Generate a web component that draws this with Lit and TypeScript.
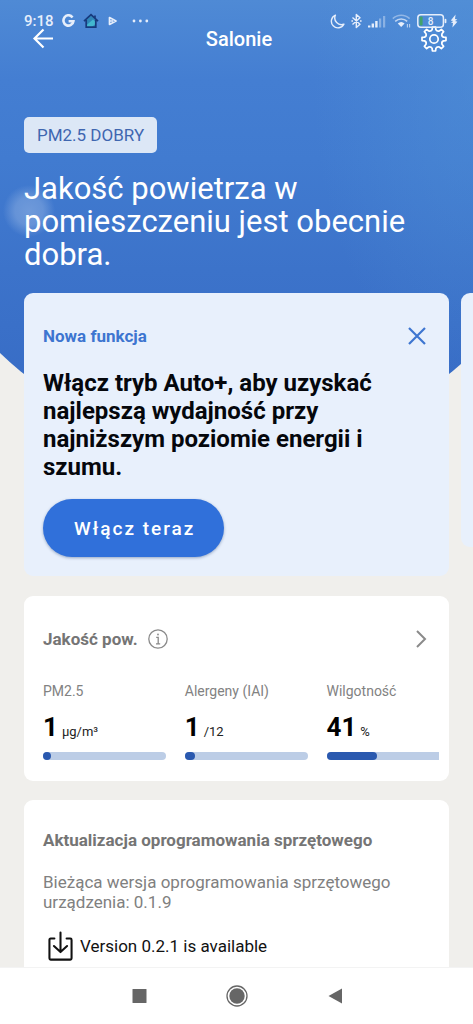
import { LitElement, html, svg, css } from "lit";
import { customElement, property } from "lit/decorators.js";

interface Metric {
  label: string;
  value: string;
  unit: string;
  percent: number;
}

const METRICS: Metric[] = [
  { label: "PM2.5", value: "1", unit: "μg/m³", percent: 2 },
  { label: "Alergeny (IAI)", value: "1", unit: "/12", percent: 8 },
  { label: "Wilgotność", value: "41", unit: "%", percent: 41 },
];

/** Outline of a cog wheel with rounded teeth, centred on 14,14. */
function cogPath(teeth: number, outer: number, inner: number): string {
  const step = (Math.PI * 2) / teeth;
  const at = (angle: number, radius: number) =>
    `${(14 + Math.sin(angle) * radius).toFixed(2)} ${(14 - Math.cos(angle) * radius).toFixed(2)}`;
  let d = "";
  for (let i = 0; i < teeth; i++) {
    const a = i * step;
    d += `${i ? "L" : "M"}${at(a - step * 0.17, outer)}L${at(a + step * 0.17, outer)}`;
    d += `L${at(a + step * 0.25, inner + 0.6)}Q${at(a + step * 0.5, inner - 1.2)} ${at(a + step * 0.75, inner + 0.6)}`;
  }
  return d + "Z";
}

@customElement("status-bar")
export class StatusBar extends LitElement {
  static styles = css`
    :host {
      display: flex;
      align-items: center;
      justify-content: space-between;
      height: 42px;
      padding: 0 15px 0 24px;
      color: #e6eefb;
      font-size: 15px;
      font-weight: 500;
    }
    .group {
      display: flex;
      align-items: center;
    }
    .left {
      gap: 8px;
    }
    .right {
      gap: 6px;
    }
    svg {
      display: block;
      flex: none;
    }
    .digit {
      font: 500 10px Roboto, sans-serif;
    }
  `;

  render() {
    return html`
      <div class="group left">
        <time>9:18</time>
        <svg width="13" height="14" viewBox="0 0 13 14" fill="none" stroke="currentColor" stroke-width="2.6" aria-hidden="true">
          <path d="M10.500 3.400A5 5.200 0 1 0 11.400 7.200H6.600" />
        </svg>
        <svg width="16" height="16" viewBox="0 0 16 16" aria-hidden="true">
          <path d="M3.4 7V14.2H12.6V7L8 2.8Z" fill="#2f86b8" />
          <path d="M3 12.5L10 6.5L12.6 9V11L8 14.4H3.4Z" fill="#43b7cf" />
          <path d="M1 8.2L8 1.6L15 8.2M3.2 7V14.2H12.8V7M12 2.5V5" fill="none" stroke="#173a7c" stroke-width="1.7" />
        </svg>
        <svg width="12" height="12" viewBox="0 0 12 12" fill="none" stroke="currentColor" stroke-width="1.7" stroke-linejoin="round" aria-hidden="true">
          <path d="M2.500 2.600L9 6L2.500 9.400ZM3 6H6" />
        </svg>
        <svg width="24" height="6" viewBox="0 0 24 6" fill="currentColor" aria-hidden="true">
          <circle cx="7" cy="3" r="1.4" /><circle cx="13.400" cy="3" r="1.4" /><circle cx="19.800" cy="3" r="1.4" />
        </svg>
      </div>
      <div class="group right">
        <svg width="15" height="15" viewBox="0 0 15 15" fill="none" stroke="currentColor" stroke-width="1.4" stroke-linejoin="round" aria-hidden="true">
          <path d="M5.4 1.2A6.6 6.6 0 1 0 13.9 10.2A6.7 6.7 0 0 1 5.4 1.2Z" />
        </svg>
        <svg width="11" height="16" viewBox="0 0 11 16" fill="none" stroke="currentColor" stroke-width="1.4" stroke-linejoin="round" aria-hidden="true">
          <path d="M1.5 4.5L9 11.2L5.3 14.6V1.4L9 4.8L1.5 11.5" />
          <path d="M0.4 8H2M9 8H10.6" />
        </svg>
        <svg width="18" height="13" viewBox="0 0 18 13" fill="currentColor" aria-hidden="true">
          <rect x="0" y="10.5" width="2.4" height="2" />
          <rect x="3.6" y="8.5" width="2.4" height="4" />
          <rect x="7.2" y="6" width="2.4" height="6.5" />
          <g opacity="0.4">
            <rect x="11" y="3.5" width="2.2" height="9" />
            <rect x="15" y="1" width="2.2" height="11.5" />
          </g>
        </svg>
        <svg width="19" height="14" viewBox="0 0 19 14" fill="none" stroke="currentColor" stroke-width="1.5" aria-hidden="true">
          <path d="M0.8 4.6A12 12 0 0 1 17.6 4.6" opacity="0.45" />
          <path d="M3.2 7.4A8.6 8.6 0 0 1 15.2 7.4" opacity="0.75" />
          <path d="M5.8 9.6A5 5 0 0 1 12.6 9.6L9.2 13Z" fill="currentColor" stroke="none" />
          <path d="M15.4 10V13.6M17.6 10V13.6" stroke-width="1.1" opacity="0.7" />
        </svg>
        <svg width="41" height="14" viewBox="0 0 41 14" aria-label="8%" role="img">
          <rect x="0.8" y="0.8" width="25.6" height="12.4" rx="3" fill="none" stroke="currentColor" stroke-width="1.5" />
          <rect x="2.6" y="2.6" width="3" height="8.8" rx="1" fill="#41a36b" />
          <rect x="27.6" y="4.8" width="1.8" height="4.4" rx="0.9" fill="currentColor" />
          <text class="digit" x="13.6" y="10.6" text-anchor="middle" fill="currentColor">8</text>
          <path d="M38.6 0.5L33.8 6.4L36.2 6.9L34 8.4L36 9L35.4 13.5L40.4 7.8L38 7L40.4 5.6L38 5Z" fill="currentColor" />
        </svg>
      </div>
    `;
  }
}

@customElement("metric-item")
export class MetricItem extends LitElement {
  @property({ attribute: false }) metric!: Metric;

  static styles = css`
    :host {
      display: block;
    }
    .label {
      color: #828282;
      font-size: 14px;
      line-height: 20px;
    }
    .reading {
      display: flex;
      align-items: baseline;
      gap: 4px;
      margin: 9px 0 3px;
      color: #000;
      line-height: 34px;
    }
    .value {
      font-size: 26px;
      font-weight: 700;
    }
    .unit {
      color: #222;
      font-size: 13px;
    }
    .track {
      height: 8px;
      border-radius: 4px;
      background: #bccde6;
    }
    .fill {
      min-width: 8px;
      height: 8px;
      border-radius: 4px;
      background: #2a59af;
    }
  `;

  render() {
    const { label, value, unit, percent } = this.metric;
    return html`
      <div class="label">${label}</div>
      <div class="reading"><span class="value">${value}</span><span class="unit">${unit}</span></div>
      <div class="track"><div class="fill" style="width:${percent}%"></div></div>
    `;
  }
}

@customElement("app-root")
export class AppRoot extends LitElement {
  static styles = css`
    :host {
      display: flex;
      flex-direction: column;
      height: 100vh;
      background: #f0efec;
      font-family: Roboto, "Noto Sans", sans-serif;
    }
    * {
      box-sizing: border-box;
    }
    h1,
    h2,
    p {
      margin: 0;
      font-weight: 400;
    }
    button {
      display: grid;
      place-items: center;
      margin: 0;
      padding: 0;
      border: 0;
      background: none;
      color: inherit;
      font: inherit;
      cursor: pointer;
    }
    svg {
      display: block;
    }
    .screen {
      position: relative;
      flex: 1;
      min-height: 0;
      overflow: hidden;
      isolation: isolate;
    }
    .sky {
      position: absolute;
      inset: 0 0 auto;
      z-index: -1;
      height: 480px;
      clip-path: circle(72vw at 50% calc(354px - 52vw));
      background:
        radial-gradient(circle at 29px 211px, #6f9ada 0, #6f9adacc 14px, #6f9ada00 26px),
        radial-gradient(ellipse 160px 300px at 100% 80px, #5597d866, #5597d800),
        linear-gradient(#4f8ad5, #447ed2 80px, #417bd0 160px, #3c73ca 270px, #386dc6 380px);
    }
    .status {
      position: absolute;
      inset: 0 0 auto;
    }
    .appbar {
      display: grid;
      grid-template-columns: 40px 1fr 40px;
      align-items: center;
      height: 78px;
      padding: 0 19px 0 24px;
      color: #fff;
    }
    .appbar h1 {
      font-size: 20px;
      font-weight: 500;
      text-align: center;
    }
    .intro {
      padding: 39px 24px 22px;
      color: #fff;
    }
    .chip {
      display: inline-block;
      padding: 0 13px;
      border-radius: 5px;
      background: #dce7f6;
      color: #3f66b0;
      font-size: 17px;
      line-height: 36px;
    }
    .headline {
      margin-top: 19px;
      font-size: 31px;
      line-height: 33px;
    }
    .carousel {
      display: flex;
      align-items: flex-start;
      gap: 12px;
      padding-left: 24px;
      overflow: hidden;
    }
    .promo {
      flex: none;
      width: calc(100% - 24px);
      min-height: 254px;
      padding: 19px;
      border-radius: 9px;
      background: #e8f0fc;
    }
    .promo-head {
      display: flex;
      align-items: center;
      justify-content: space-between;
      height: 48px;
      color: #3d75d0;
    }
    .promo-tag {
      font-size: 17px;
      font-weight: 700;
    }
    .promo-title {
      margin-top: 9px;
      color: #05070c;
      font-size: 24px;
      font-weight: 700;
      line-height: 28px;
    }
    .cta {
      height: 58px;
      margin-top: 18px;
      padding: 0 29px 0 31px;
      border-radius: 29px;
      background: #3070da;
      box-shadow: 0 1px 3px #1c3c7466;
      color: #fff;
      font-size: 19px;
      font-weight: 500;
      letter-spacing: 2px;
    }
    .card {
      margin: 20px 24px 0;
      padding: 19px;
      border-radius: 9px;
      background: #fff;
    }
    .air {
      padding-right: 10px;
      padding-bottom: 21px;
    }
    .card-title {
      color: #757575;
      font-size: 17px;
      font-weight: 700;
    }
    .air-head {
      display: flex;
      align-items: center;
      gap: 10px;
      height: 48px;
      padding-right: 10px;
      color: #8a8a8a;
    }
    .more {
      margin-left: auto;
    }
    .metrics {
      display: flex;
      gap: 19px;
      margin-top: 18px;
      overflow: hidden;
    }
    .metric {
      flex: 0 0 31%;
    }
    .firmware {
      margin-top: 19px;
      font-size: 17px;
    }
    .firmware .card-title {
      line-height: 42px;
    }
    .current {
      margin-top: 11px;
      color: #808080;
      line-height: 20px;
    }
    .update {
      display: flex;
      align-items: center;
      gap: 7px;
      margin-top: 19px;
      padding-left: 5px;
      color: #111;
    }
    .navbar {
      display: flex;
      flex: none;
      justify-content: center;
      height: 57px;
      border-top: 1px solid #f3f3f3;
      background: #fff;
      color: #666;
    }
    .navbar button {
      width: 98px;
    }
  `;

  render() {
    return html`
      <main class="screen">
        <div class="sky"></div>
        <header class="appbar">
          <button aria-label="Wstecz">
            <svg width="40" height="28" viewBox="0 0 40 28" fill="none" stroke="currentColor" stroke-width="2.2">
              <path d="M29 13.500H11M19.500 4.500L10.500 13.500L19.500 22.500" />
            </svg>
          </button>
          <h1>Salonie</h1>
          <button aria-label="Ustawienia">
            <svg width="28" height="28" viewBox="0 0 28 28" fill="none" stroke="currentColor" stroke-width="1.7" stroke-linejoin="round">
              ${svg`<path d=${cogPath(8, 12.1, 9)} />`}
              <circle cx="14" cy="14" r="4.200" />
            </svg>
          </button>
        </header>
        <status-bar class="status"></status-bar>

        <section class="intro">
          <span class="chip">PM2.5 DOBRY</span>
          <p class="headline">Jakość powietrza w pomieszczeniu jest obecnie dobra.</p>
        </section>

        <section class="carousel">
          <article class="promo">
            <div class="promo-head">
              <span class="promo-tag">Nowa funkcja</span>
              <button aria-label="Zamknij">
                <svg width="26" height="26" viewBox="0 0 26 26" fill="none" stroke="currentColor" stroke-width="2.2">
                  <path d="M5 5L21 21M21 5L5 21" />
                </svg>
              </button>
            </div>
            <h2 class="promo-title">Włącz tryb Auto+, aby uzyskać najlepszą wydajność przy najniższym poziomie energii i szumu.</h2>
            <button class="cta">Włącz teraz</button>
          </article>
          <article class="promo"></article>
        </section>

        <section class="card air">
          <div class="air-head">
            <h2 class="card-title">Jakość pow.</h2>
            <button aria-label="Informacje">
              <svg width="20" height="20" viewBox="0 0 20 20" fill="none" stroke="currentColor" stroke-width="1.300">
                <circle cx="10" cy="10" r="9.200" />
                <path d="M8.200 8.300H10.200V14.800M8 14.800H12.200" />
                <circle cx="10" cy="5.500" r="0.900" fill="currentColor" stroke="none" />
              </svg>
            </button>
            <button class="more" aria-label="Szczegóły">
              <svg width="16" height="22" viewBox="0 0 16 22" fill="none" stroke="currentColor" stroke-width="2">
                <path d="M4 3L12 11L4 19" />
              </svg>
            </button>
          </div>
          <div class="metrics">
            ${METRICS.map((m) => html`<metric-item class="metric" .metric=${m}></metric-item>`)}
          </div>
        </section>

        <section class="card firmware">
          <h2 class="card-title">Aktualizacja oprogramowania sprzętowego</h2>
          <p class="current">Bieżąca wersja oprogramowania sprzętowego urządzenia: 0.1.9</p>
          <div class="update">
            <svg width="25" height="30" viewBox="0 0 26 32" fill="none" stroke="currentColor" stroke-width="2.2" stroke-linejoin="round" stroke-linecap="round" aria-hidden="true">
              <path d="M6.500 8H2.500Q1.200 8 1.200 9.500V29Q1.200 30.500 2.500 30.500H23.500Q24.800 30.500 24.800 29V9.500Q24.800 8 23.500 8H19.500" />
              <path d="M13 1.500V22M6 16L13 22.500L20 16" />
            </svg>
            <span>Version 0.2.1 is available</span>
          </div>
        </section>
      </main>

      <nav class="navbar">
        <button aria-label="Ostatnie">
          <svg width="22" height="22" viewBox="0 0 22 22" fill="currentColor"><rect x="4.500" y="4" width="14" height="14" rx="0.500" /></svg>
        </button>
        <button aria-label="Ekran główny">
          <svg width="22" height="22" viewBox="0 0 22 22">
            <circle cx="11" cy="11" r="10" fill="none" stroke="currentColor" stroke-width="1.300" />
            <circle cx="11" cy="11" r="7.700" fill="currentColor" />
          </svg>
        </button>
        <button aria-label="Wstecz">
          <svg width="22" height="22" viewBox="0 0 22 22" fill="currentColor"><path d="M4.500 11L18 3.500V18.500Z" /></svg>
        </button>
      </nav>
    `;
  }
}
